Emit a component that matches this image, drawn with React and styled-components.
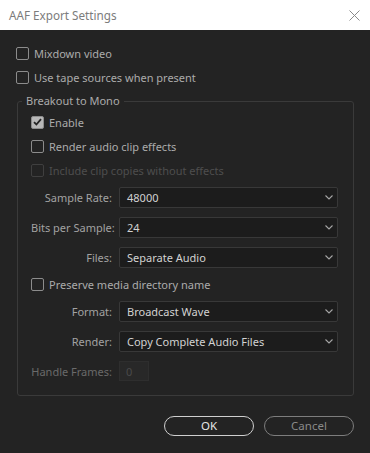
import React from "react";
import styled, { createGlobalStyle } from "styled-components";

const Global = createGlobalStyle`
	body {
		margin: 0;
		background: #232323;
		font-family: "Noto Sans", "Open Sans", sans-serif;
	}
`;

const Window = styled.div`
	width: 370px;
	height: 453px;
	display: flex;
	flex-direction: column;
	background: #232323;
	overflow: hidden;
`;

const TitleBar = styled.div`
	height: 30px;
	flex: none;
	background: #ffffff;
	display: flex;
	align-items: center;
	justify-content: space-between;
	padding: 0 10px 0 9px;
	box-sizing: border-box;
`;

const Title = styled.span`
	font-size: 11.7px;
	color: #7c7c7c;
`;

const Close = styled.svg`
	width: 11px;
	height: 11px;
	display: block;
`;

const Body = styled.div`
	padding: 11px 16px 0 16px;
	display: flex;
	flex-direction: column;
`;

const CheckRow = styled.label`
	height: 24px;
	display: flex;
	align-items: center;
	gap: 5px;
	font-size: 11px;
	color: ${(props) => (props.disabled ? "#4e4e4e" : "#ababab")};
`;

const Box = styled.span`
	width: 13px;
	height: 13px;
	box-sizing: border-box;
	border-radius: 2px;
	border: 1.5px solid ${(props) => (props.disabled ? "#3f3f3f" : "#8c8c8c")};
	background: ${(props) => (props.checked ? "#b8b8b8" : "transparent")};
	display: flex;
	align-items: center;
	justify-content: center;
	flex: none;
`;

const Group = styled.fieldset`
	margin: 4px 0 0 1px;
	padding: 1px 13px 9px 13px;
	border: 1px solid #3a3a3a;
	border-radius: 3px;
	min-width: 0;
`;

const Legend = styled.legend`
	margin-left: -9px;
	padding: 0 4px;
	font-size: 11px;
	line-height: 16px;
	color: #ababab;
`;

const FieldRow = styled.div`
	height: 30px;
	display: grid;
	grid-template-columns: 81px 219px;
	column-gap: 7px;
	align-items: center;
`;

const Label = styled.span`
	text-align: right;
	white-space: nowrap;
	font-size: 11px;
	color: ${(props) => (props.disabled ? "#6a6a6a" : "#a2a2a2")};
`;

const Select = styled.div`
	height: 21px;
	box-sizing: border-box;
	border: 1px solid #383838;
	border-radius: 2px;
	background: #1c1c1c;
	display: flex;
	align-items: center;
	justify-content: space-between;
	padding: 0 4px 0 7px;
	font-size: 11px;
	color: #d2d2d2;
`;

const NumberBox = styled.div`
	width: 30px;
	height: 20px;
	box-sizing: border-box;
	border: 1px solid #2e2e2e;
	background: #282828;
	display: flex;
	align-items: center;
	padding-left: 6px;
	font-size: 11px;
	color: #4a4a4a;
`;

const Footer = styled.div`
	display: flex;
	justify-content: flex-end;
	gap: 10px;
	margin-top: 20px;
`;

const Button = styled.button`
	width: 90px;
	height: 20px;
	box-sizing: border-box;
	border-radius: 10px;
	border: 1.5px solid ${(props) => (props.primary ? "#cfcfcf" : "#7d7d7d")};
	background: transparent;
	color: ${(props) => (props.primary ? "#e6e6e6" : "#8a8a8a")};
	font-family: inherit;
	font-size: 11.5px;
	padding: 0;
	line-height: 1;
`;

const Chevron = () => (
	<svg width="8" height="5" viewBox="0 0 8 5">
		<path d="M0.5 0.5 L4 4 L7.5 0.5" fill="none" stroke="#a5a5a5" strokeWidth="1.1" />
	</svg>
);

const Check = ({ checked, disabled, children }) => (
	<CheckRow disabled={disabled}>
		<Box checked={checked} disabled={disabled}>
			{checked && (
				<svg width="9" height="8" viewBox="0 0 9 8">
					<path d="M1 4.2 L3.4 6.5 L8 1.2" fill="none" stroke="#262626" strokeWidth="1.8" />
				</svg>
			)}
		</Box>
		{children}
	</CheckRow>
);

const Field = ({ label, value }) => (
	<FieldRow>
		<Label>{label}</Label>
		<Select>
			<span>{value}</span>
			<Chevron />
		</Select>
	</FieldRow>
);

export default function App() {
	return (
		<Window>
			<Global />
			<TitleBar>
				<Title>AAF Export Settings</Title>
				<Close viewBox="0 0 11 11">
					<path d="M0.5 0.5 L10.5 10.5 M10.5 0.5 L0.5 10.5" stroke="#8a8a8a" strokeWidth="1" />
				</Close>
			</TitleBar>
			<Body>
				<Check>Mixdown video</Check>
				<Check>Use tape sources when present</Check>
				<Group>
					<Legend>Breakout to Mono</Legend>
					<Check checked>Enable</Check>
					<Check>Render audio clip effects</Check>
					<Check disabled>Include clip copies without effects</Check>
					<Field label="Sample Rate:" value="48000" />
					<Field label="Bits per Sample:" value="24" />
					<Field label="Files:" value="Separate Audio" />
					<Check>Preserve media directory name</Check>
					<Field label="Format:" value="Broadcast Wave" />
					<Field label="Render:" value="Copy Complete Audio Files" />
					<FieldRow>
						<Label disabled>Handle Frames:</Label>
						<NumberBox>0</NumberBox>
					</FieldRow>
				</Group>
				<Footer>
					<Button primary>OK</Button>
					<Button>Cancel</Button>
				</Footer>
			</Body>
		</Window>
	);
}
